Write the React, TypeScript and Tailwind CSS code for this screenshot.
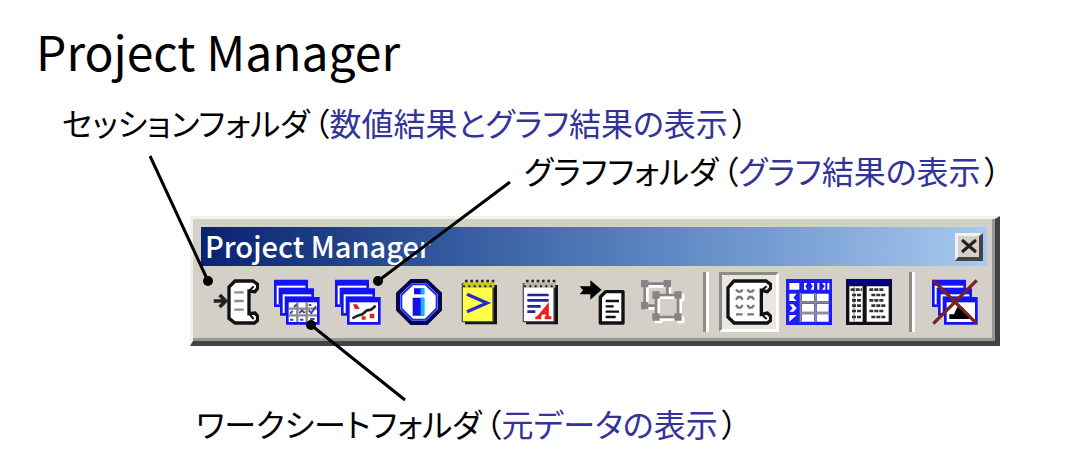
import React, { useState } from 'react';
import { clsx } from 'clsx';

interface CaptionProps {
  name: string;
  detail: string;
  className?: string;
}

const Caption: React.FC<CaptionProps> = ({ name, detail, className }) => (
  <p className={clsx('whitespace-nowrap text-[32px] leading-12', className)}>
    {name}
    <span className="ml-1">（</span>
    <span className="text-[#33339a]">{detail}</span>
    <span className="ml-1">）</span>
  </p>
);

const Icon: React.FC<{ children: React.ReactNode }> = ({ children }) => (
  <svg viewBox="0 0 138 138" className="h-[46px] w-[46px]" aria-hidden="true">
    {children}
  </svg>
);

// Paper roll outline shared by the session icons
const SCROLL = 'M66 6H120L134 16V28L126 38L108 36V104L126 102L134 112V124L124 132H66L48 118V24Z';

const SessionIcon = () => (
  <Icon>
    <path d={SCROLL} fill="#fff" stroke="#111" strokeWidth="10" />
    <path d="M108 36L122 22M108 104L122 120" stroke="#111" strokeWidth="6" />
    <path d="M64 40H92M64 66H92M64 92H92" stroke="#8a8a8a" strokeWidth="7" />
    <path d="M2 66H38M20 48L38 66L20 84" fill="none" stroke="#222" strokeWidth="11" />
  </Icon>
);

const Sheets = () => (
  <>
    <path d="M0 2H102V84H0Z" fill="#1313f5" />
    <path d="M8 20H94V76H8Z" fill="#fff" />
    <path d="M14 26H94V76H14Z" fill="#1313f5" />
    <path d="M18 28H120V110H18Z" fill="#1313f5" />
    <path d="M26 46H112V102H26Z" fill="#fff" />
    <path d="M32 52H112V102H32Z" fill="#1313f5" />
    <path d="M36 54H137V137H36Z" fill="#1313f5" />
    <path d="M44 70H129V129H44Z" fill="#fff" />
  </>
);

const WorksheetIcon = () => (
  <Icon>
    <Sheets />
    <path d="M44 89H129M44 109H129M70 70V129M98 70V129" stroke="#8d8a80" strokeWidth="7" />
    <path d="M48 104L56 96M60 84L68 76M76 102L84 94L92 102M104 94L112 102L126 82M104 78H112M48 122H58M78 122H88M108 120H122" fill="none" stroke="#3a3fd0" strokeWidth="6" />
  </Icon>
);

const GraphIcon = () => (
  <Icon>
    <Sheets />
    <path d="M52 118L68 110L82 106L96 94L108 92L122 80" fill="none" stroke="#222" strokeWidth="8" />
    <path d="M54 76H66L74 90H60ZM104 104H118V118H104ZM80 112H92V122H80Z" fill="#d9251d" />
  </Icon>
);

const InfoIcon = () => (
  <Icon>
    <path d="M46 6H92L132 44V92L92 132H46L6 92V44Z" fill="#fff" stroke="#050550" strokeWidth="12" />
    <path d="M50 16H88L122 48V88L88 122H50L16 88V48Z" fill="#fff" stroke="#1428ff" strokeWidth="6" />
    <path d="M54 28H84V46H54ZM50 56H84V110H50Z" fill="#1212e8" />
    <path d="M74 28H86V46H74ZM74 56H86V110H74Z" fill="#19b4ff" />
  </Icon>
);

const Notepad = ({ paper, binding }: { paper: string; binding: string }) => (
  <>
    <path d="M24 18H120V136H24Z" fill="#111" />
    <path d="M16 14H108V128H16Z" fill={paper} stroke="#555" strokeWidth="4" />
    <path d="M20 10H112V26H20Z" fill={binding} />
    <path d="M24 6H116" stroke="#222" strokeWidth="8" strokeDasharray="8 8" />
    <path d="M18 22H108" stroke="#222" strokeWidth="6" strokeDasharray="6 10" />
  </>
);

const CommandIcon = () => (
  <Icon>
    <Notepad paper="#ffff4a" binding="#c6c818" />
    <path d="M30 46L90 72L30 98" fill="none" stroke="#2828d8" strokeWidth="10" />
  </Icon>
);

const ReportIcon = () => (
  <Icon>
    <Notepad paper="#fff" binding="#b5b5ae" />
    <path d="M28 48H92M28 64H92M28 82H68M28 98H52" stroke="#25259a" strokeWidth="8" />
    <path d="M52 116H70M80 116H100M60 116L88 82V116M68 102H88" fill="none" stroke="#ee1c1c" strokeWidth="9" />
  </Icon>
);

const DocumentsIcon = () => (
  <Icon>
    <path d="M2 22H34V4L68 32L34 62V46H2L12 34Z" fill="#000" />
    <path d="M80 38H132V132H64V54Z" fill="#fff" stroke="#111" strokeWidth="10" strokeLinejoin="round" />
    <path d="M80 66H120M80 82H104M80 98H120M80 114H110" stroke="#111" strokeWidth="7" />
  </Icon>
);

const ObjectsIcon = () => (
  <Icon>
    <path d="M22 22H90V88H22Z" fill="none" stroke="#fff" strokeWidth="8" />
    <path d="M56 56H122V122H56Z" fill="#d4d0c8" stroke="#fff" strokeWidth="8" />
    <path d="M112 45H133V67H112ZM112 112H133V133H112ZM45 112H67V133H45Z" fill="#fff" />
    <path d="M14 14H82V48M48 80H14V14M48 48H114V114H48Z" fill="none" stroke="#858585" strokeWidth="8" />
    <path d="M3 3H25V25H3ZM71 3H93V25H71ZM3 69H25V91H3ZM37 37H59V59H37ZM103 37H125V59H103ZM37 103H59V125H37ZM103 103H125V125H103Z" fill="#858585" />
  </Icon>
);

const SessionWindowIcon = () => (
  <Icon>
    <path
      d="M24 6H120L134 16V28L124 38L106 34V106L124 102L134 112V124L124 132H24L6 114V26Z"
      fill="#fff"
      stroke="#111"
      strokeWidth="10"
    />
    <path d="M106 34L122 22M106 106L122 120" stroke="#111" strokeWidth="6" />
    <path
      d="M30 32L36 38H44L50 32M64 32L70 38H78L84 32M30 62L36 54H44L50 62M64 62L70 54H78L84 62M30 78L36 86H44L50 78M64 78L70 86H78L84 78M30 106H50M64 106H84"
      fill="none"
      stroke="#777"
      strokeWidth="7"
    />
  </Icon>
);

const GridIcon = () => (
  <Icon>
    <path d="M0 0H138V138H0Z" fill="#1c1cf8" />
    <path d="M10 12H40V32H10ZM48 44H84V66H48ZM92 44H128V66H92ZM48 74H84V98H48ZM92 74H128V98H92ZM48 106H84V128H48ZM92 106H128V128H92Z" fill="#fff" />
    <path d="M44 42V130M88 42V130M46 70H130M46 102H130" stroke="#8d8d8d" strokeWidth="6" />
    <path d="M54 12V32H64L58 22L64 12ZM74 12H84V32H74L80 22ZM94 12V32H100V12ZM108 12L116 22L108 32H118V12ZM124 12V32H130V12ZM10 44V66H32L22 56L32 44ZM10 76L20 88L10 98H22L32 88L22 76ZM10 108V128L32 108Z" fill="#fff" />
  </Icon>
);

const SplitIcon = () => (
  <Icon>
    <path d="M0 0H138V138H0Z" fill="#111" />
    <path d="M4 2H134V18H4Z" fill="#000080" />
    <path d="M10 22H50V128H10ZM62 22H128V128H62Z" fill="#fff" />
    <path d="M24 22V128" stroke="#999" strokeWidth="4" />
    <path
      d="M14 32H48M18 48H48M18 64H48M18 80H48M18 96H48M18 114H48M70 32H112M76 48H120M70 64H112M76 80H120M70 96H112M76 114H120"
      stroke="#333"
      strokeWidth="8"
      strokeDasharray="12 3"
    />
  </Icon>
);

const CloseGraphsIcon = () => (
  <Icon>
    <Sheets />
    <path d="M52 120V106H66L76 84H92L102 106H112V120Z" fill="#000" />
    <path d="M4 4L134 134M134 4L4 134" stroke="#7c2020" strokeWidth="10" />
  </Icon>
);

const FOLDERS = [
  { id: 'session', label: 'セッションフォルダ', icon: SessionIcon },
  { id: 'worksheets', label: 'ワークシートフォルダ', icon: WorksheetIcon },
  { id: 'graphs', label: 'グラフフォルダ', icon: GraphIcon },
  { id: 'info', label: 'Info', icon: InfoIcon },
  { id: 'history', label: 'History', icon: CommandIcon },
  { id: 'report', label: 'ReportPad', icon: ReportIcon },
  { id: 'documents', label: 'Related Documents', icon: DocumentsIcon },
  { id: 'objects', label: 'Objects', icon: ObjectsIcon },
];

const VIEWS = [
  { id: 'session-window', label: 'Session Window', icon: SessionWindowIcon },
  { id: 'data-window', label: 'Data Window', icon: GridIcon },
  { id: 'manager-window', label: 'Manager Window', icon: SplitIcon },
];

const Separator = () => (
  <div className="flex w-[26px] justify-center">
    <div className="h-[60px] w-[6px] border-r-3 border-l-3 border-l-[#8e8b85] border-r-white" />
  </div>
);

const Toolbar = () => {
  const [view, setView] = useState('session-window');

  return (
    <section
      aria-label="Project Manager"
      className="border-t-3 border-r-5 border-b-5 border-l-3 border-t-[#f3f1eb] border-r-[#444147] border-b-[#444147] border-l-[#f3f1eb] bg-[#d4d0c8] px-2 pt-2 pb-[9px] shadow-[inset_-3px_-3px_0_#9b9893]"
    >
      <header className="flex h-[39px] items-center justify-between bg-linear-to-r from-[#0a2270] via-[#5078b8] to-[#a6caf0] pr-1 pl-1">
        <h2 className="pb-1 text-[29px] leading-8 font-medium text-white">Project Manager</h2>
        <button
          type="button"
          aria-label="Close"
          className="flex h-7 w-7 items-center justify-center border-t-3 border-r-4 border-b-4 border-l-3 border-t-[#f3f1eb] border-r-[#444147] border-b-[#444147] border-l-[#f3f1eb] bg-[#d4d0c8]"
        >
          <svg viewBox="0 0 16 16" className="h-4 w-4" aria-hidden="true">
            <path d="M1 2L15 14M15 2L1 14" stroke="#222" strokeWidth="3" />
          </svg>
        </button>
      </header>

      <div className="mt-[6px] flex pl-1">
        {FOLDERS.map(({ id, label, icon: ItemIcon }) => (
          <button key={id} type="button" aria-label={label} className="flex h-[60px] w-[61px] items-center justify-center">
            <ItemIcon />
          </button>
        ))}
        <Separator />
        {VIEWS.map(({ id, label, icon: ItemIcon }) => (
          <button
            key={id}
            type="button"
            aria-label={label}
            aria-pressed={view === id}
            onClick={() => setView(id)}
            className={clsx(
              'flex h-[60px] w-[60px] items-center justify-center border-3',
              view === id
                ? 'border-t-[#8e8b85] border-r-white border-b-white border-l-[#8e8b85] bg-[#e9e7e3]'
                : 'border-transparent'
            )}
          >
            <ItemIcon />
          </button>
        ))}
        <Separator />
        <button type="button" aria-label="Close All Graphs" className="flex h-[60px] w-[60px] items-center justify-center">
          <CloseGraphsIcon />
        </button>
      </div>
    </section>
  );
};

// Leader lines that run from each caption to its button
const Leaders = () => (
  <svg className="pointer-events-none absolute top-0 left-0" width="520" height="410" aria-hidden="true">
    <path d="M150 156L208 281M510 182L378 281M405 400L311 325" stroke="#000" strokeWidth="3" />
    <circle cx="208" cy="281" r="5" />
    <circle cx="378" cy="281" r="5" />
    <circle cx="311" cy="325" r="5" />
  </svg>
);

export default function App() {
  return (
    <main className="relative bg-white pt-5 pb-3 font-['Noto_Sans_CJK_JP',sans-serif] text-black [font-feature-settings:'palt']">
      <h1 className="pl-9 text-5xl leading-15">Project Manager</h1>
      <Caption className="mt-[18px] pl-[62px]" name="セッションフォルダ" detail="数値結果とグラフ結果の表示" />
      <Caption className="pl-[524px]" name="グラフフォルダ" detail="グラフ結果の表示" />
      <div className="mt-[22px] mr-[92px] ml-[190px]">
        <Toolbar />
      </div>
      <Caption className="mt-[53px] pl-[196px]" name="ワークシートフォルダ" detail="元データの表示" />
      <Leaders />
    </main>
  );
}
